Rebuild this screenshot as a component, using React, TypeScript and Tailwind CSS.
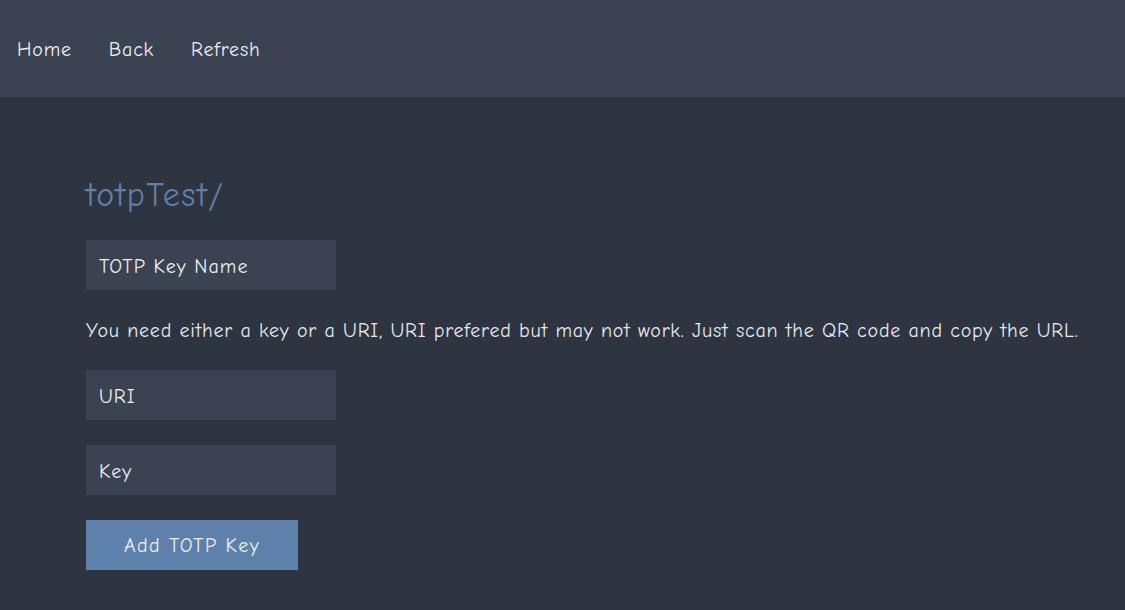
import React from 'react';

const font = { fontFamily: '"Comic Sans MS", "Comic Neue", "DejaVu Sans", sans-serif' };

const Field: React.FC<{ placeholder: string }> = ({ placeholder }) => (
  <input
    placeholder={placeholder}
    className="block w-[250px] h-[50px] bg-[#3b4252] px-[13px] pt-[2px] text-[20px] tracking-[1px] text-[#eceff4] placeholder:text-[#eceff4] outline-none"
  />
);

const App: React.FC = () => {
  return (
    <div className="min-h-[610px] bg-[#2e3440] text-[#eceff4]" style={font}>
      {/* Nav */}
      <nav className="h-[97px] bg-[#3b4252] flex items-center gap-[37px] px-[17px] pt-[2px] text-[20px] tracking-[0.8px]">
        <a className="cursor-pointer">Home</a>
        <a className="cursor-pointer">Back</a>
        <a className="cursor-pointer">Refresh</a>
      </nav>

      {/* Content */}
      <main className="pl-[86px] pt-[76px]">
        <h1 className="text-[34px] leading-[44px] tracking-[1.5px] text-[#5e81ac]">totpTest/</h1>
        <div className="mt-[23px]">
          <Field placeholder="TOTP Key Name" />
        </div>
        <p className="mt-[24px] text-[20px] leading-[34px] tracking-[0.77px] text-[#e5e9f0]">
          You need either a key or a URI, URI prefered but may not work. Just scan the QR code and copy the URL.
        </p>
        <div className="mt-[22px] flex flex-col gap-[25px] items-start">
          <Field placeholder="URI" />
          <Field placeholder="Key" />
          <button className="w-[212px] h-[50px] pt-[2px] bg-[#5e81ac] text-[20px] tracking-[1.4px] text-[#eceff4]">Add TOTP Key</button>
        </div>
      </main>
    </div>
  );
};

export default App;
